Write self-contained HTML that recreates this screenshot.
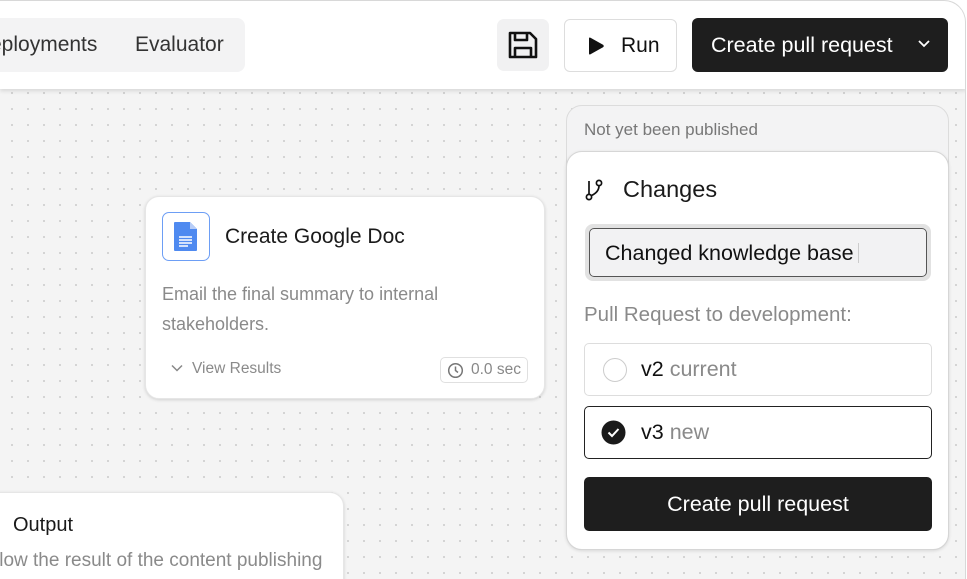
<!DOCTYPE html>
<html><head><style>
*{box-sizing:border-box;margin:0;padding:0}
html,body{width:967px;height:579px;overflow:hidden}
body{font-family:"Liberation Sans",sans-serif;background:#fff;position:relative}
.canvas{position:absolute;left:0;top:0;width:966px;height:579px;border-right:1px solid #d8d8d8;border-top:1px solid #d8d8d8;border-top-right-radius:22px;background-color:#f4f4f4;background-image:radial-gradient(#cfcfcf 0.9px,transparent 1.2px);background-size:16px 16px;background-position:4px 4px;overflow:hidden}
.header{position:absolute;left:0;top:0;width:966px;height:88px;background:#fff;border-top-right-radius:22px;box-shadow:0 2px 4px rgba(0,0,0,.12)}
.tabs{position:absolute;left:-10px;top:17px;width:255px;height:54px;background:#f3f3f4;border-radius:8px;font-size:21px;color:#333}
.tabs span{position:absolute;top:15px}
.save{position:absolute;left:497px;top:18px;width:52px;height:52px;background:#f1f1f2;border-radius:7px}
.run{position:absolute;left:564px;top:18px;width:113px;height:53px;border:1px solid #ddd;border-radius:6px;background:#fff;font-size:21px;color:#111}
.cpr{position:absolute;left:692px;top:17px;width:256px;height:54px;background:#1e1e1e;border-radius:6px;color:#fff;font-size:21.5px}
.card{position:absolute;background:#fff;border-radius:14px;box-shadow:0 1px 3px rgba(0,0,0,.15);border:1px solid #e6e6e6;overflow:hidden}
.muted{color:#8a8a8a}
</style></head><body>
<div class="canvas">
<div class="header">
 <div class="tabs"><span style="left:0">eployments</span><span style="left:145px">Evaluator</span></div>
 <div class="save"><svg width="52" height="52" viewBox="0 0 52 52"><path d="M13 14h20l6 6v18h-26z" fill="none" stroke="#111" stroke-width="2.6" stroke-linejoin="round"/><path d="M18 14v7h12v-7M18 38v-9h16v9" fill="none" stroke="#111" stroke-width="2.6" stroke-linejoin="round"/></svg></div>
 <div class="run"><svg style="position:absolute;left:21px;top:16px" width="20" height="20" viewBox="0 0 20 20"><path d="M3 2.5Q3 1 4.5 1.8L17 8.7Q18.5 10 17 11.3L4.5 18.2Q3 19 3 17.5Z" fill="#111"/></svg><span style="position:absolute;left:56px;top:14px">Run</span></div>
 <div class="cpr"><span style="position:absolute;left:19px;top:15px">Create pull request</span><svg style="position:absolute;left:225px;top:21px" width="14" height="10" viewBox="0 0 14 10"><path d="M2 2l5 5 5-5" fill="none" stroke="#fff" stroke-width="1.8"/></svg></div>
</div>

<div class="card" style="left:145px;top:195px;width:400px;height:203px">
 <div style="position:absolute;left:16px;top:15px;width:48px;height:49px;border:1px solid #6d9ef5;border-radius:7px">
  <svg width="46" height="47" viewBox="0 0 46 47"><path d="M12 9h15l7 7v21q0 1-1 1H12q-1 0-1-1V10q0-1 1-1z" fill="#4f8af0"/><path d="M27 9v7h7z" fill="#b7cdf8"/><path d="M16 24h13M16 27h13M16 30h13M16 33h9" stroke="#fff" stroke-width="1.5"/></svg>
 </div>
 <div style="position:absolute;left:79px;top:28px;font-size:21px;color:#1a1a1a">Create Google Doc</div>
 <div class="muted" style="position:absolute;left:16px;top:82px;font-size:18px;line-height:30px;width:340px">Email the final summary to internal stakeholders.</div>
 <svg style="position:absolute;left:25px;top:167px" width="12" height="8" viewBox="0 0 12 8"><path d="M1 1.5l5 5 5-5" fill="none" stroke="#888" stroke-width="1.5"/></svg>
 <div class="muted" style="position:absolute;left:46px;top:163px;font-size:15.5px">View Results</div>
 <div style="position:absolute;left:294px;top:160px;width:88px;height:26px;border:1px solid #e0e0e0;border-radius:5px;font-size:15.5px;color:#888"><svg style="position:absolute;left:6px;top:4px" width="17" height="17" viewBox="0 0 17 17"><circle cx="8.5" cy="8.5" r="6.8" fill="none" stroke="#777" stroke-width="1.5"/><path d="M8.5 4.5v4l2.5 2" fill="none" stroke="#777" stroke-width="1.5"/></svg><span style="position:absolute;left:30px;top:3px">0.0 sec</span></div>
</div>

<div class="card" style="left:-20px;top:491px;width:364px;height:100px">
 <div style="position:absolute;left:32px;top:21px;font-size:20px;color:#1a1a1a">Output</div>
 <div class="muted" style="position:absolute;left:14px;top:57px;font-size:19px;white-space:nowrap">llow the result of the content publishing</div>
</div>

<div style="position:absolute;left:566px;top:104px;width:383px;height:445px;background:#f3f3f4;border:1px solid #dcdcdc;border-radius:16px">
 <div style="position:absolute;left:17px;top:14px;font-size:17px;color:#777">Not yet been published</div>
</div>
<div style="position:absolute;left:566px;top:150px;width:383px;height:399px;background:#fff;border:1px solid #d6d6d6;border-radius:16px;box-shadow:0 1px 3px rgba(0,0,0,.12)">
 <svg style="position:absolute;left:18px;top:26px" width="22" height="24" viewBox="0 0 22 24"><circle cx="4" cy="19" r="2.6" fill="none" stroke="#111" stroke-width="1.7"/><circle cx="14" cy="5" r="2.6" fill="none" stroke="#111" stroke-width="1.7"/><path d="M4 16V3M14 7.6Q14 14 6.5 17.5" fill="none" stroke="#111" stroke-width="1.7"/></svg>
 <div style="position:absolute;left:56px;top:24px;font-size:23.5px;color:#1a1a1a">Changes</div>
 <div style="position:absolute;left:18px;top:72px;width:346px;height:57px;border:4px solid #e2e2e2;border-radius:8px"><div style="width:100%;height:100%;border:1.5px solid #555;border-radius:5px;background:#f2f2f3;font-size:21.5px;color:#111;padding:12px 0 0 15px;white-space:nowrap">Changed knowledge base<span style="display:inline-block;width:1px;height:20px;background:#ccc;margin-left:4px;vertical-align:-3px"></span></div></div>
 <div class="muted" style="position:absolute;left:17px;top:151px;font-size:20.5px">Pull Request to development:</div>
 <div style="position:absolute;left:17px;top:191px;width:348px;height:53px;border:1px solid #ddd;border-radius:5px"><div style="position:absolute;left:18px;top:14px;width:24px;height:24px;border:1.5px solid #ccc;border-radius:50%"></div><span style="position:absolute;left:56px;top:13px;font-size:21.5px;color:#111">v2 <span class="muted">current</span></span></div>
 <div style="position:absolute;left:17px;top:254px;width:348px;height:53px;border:1.5px solid #222;border-radius:5px"><svg style="position:absolute;left:16px;top:13px" width="25" height="25" viewBox="0 0 25 25"><circle cx="12.5" cy="12.5" r="12" fill="#1a1a1a"/><path d="M7.5 12.5l3.5 3.5 6.5-7" fill="none" stroke="#fff" stroke-width="2"/></svg><span style="position:absolute;left:56px;top:13px;font-size:21.5px;color:#111">v3 <span class="muted">new</span></span></div>
 <div style="position:absolute;left:17px;top:325px;width:348px;height:54px;background:#1e1e1e;border-radius:5px;color:#fff;font-size:21.5px;text-align:center;line-height:54px">Create pull request</div>
</div>
</div>
</body></html>
